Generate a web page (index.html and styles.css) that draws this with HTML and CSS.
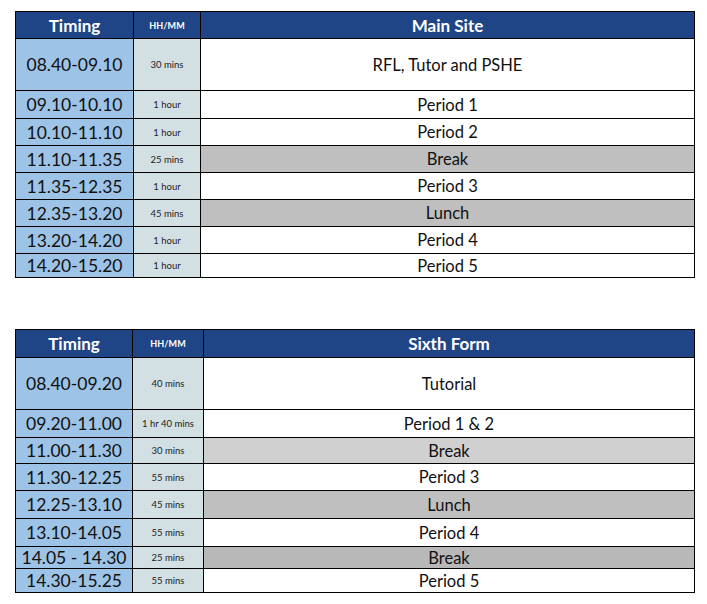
FILE: index.html
```html
<!DOCTYPE html>
<html lang="en">
<head>
<meta charset="utf-8">
<title>Timings</title>
<link rel="stylesheet" href="styles.css">
</head>
<body>
<main class="page">
  <table class="sched sched-main">
    <colgroup><col class="c-time"><col class="c-dur"><col class="c-act"></colgroup>
    <thead>
      <tr class="r-head"><th class="h-time">Timing</th><th class="h-dur">HH/MM</th><th class="h-act">Main Site</th></tr>
    </thead>
    <tbody>
      <tr class="r-52"><td class="time">08.40-09.10</td><td class="dur">30 mins</td><td class="act">RFL, Tutor and PSHE</td></tr>
      <tr class="r-28"><td class="time">09.10-10.10</td><td class="dur">1 hour</td><td class="act">Period 1</td></tr>
      <tr class="r-27"><td class="time">10.10-11.10</td><td class="dur">1 hour</td><td class="act">Period 2</td></tr>
      <tr class="r-27"><td class="time">11.10-11.35</td><td class="dur">25 mins</td><td class="act grey">Break</td></tr>
      <tr class="r-27"><td class="time">11.35-12.35</td><td class="dur">1 hour</td><td class="act">Period 3</td></tr>
      <tr class="r-27"><td class="time">12.35-13.20</td><td class="dur">45 mins</td><td class="act grey">Lunch</td></tr>
      <tr class="r-27"><td class="time">13.20-14.20</td><td class="dur">1 hour</td><td class="act">Period 4</td></tr>
      <tr class="r-24"><td class="time">14.20-15.20</td><td class="dur">1 hour</td><td class="act">Period 5</td></tr>
    </tbody>
  </table>

  <table class="sched sched-sixth">
    <colgroup><col class="c-time"><col class="c-dur"><col class="c-act"></colgroup>
    <thead>
      <tr class="r-head2"><th class="h-time">Timing</th><th class="h-dur">HH/MM</th><th class="h-act">Sixth Form</th></tr>
    </thead>
    <tbody>
      <tr class="r-52"><td class="time">08.40-09.20</td><td class="dur">40 mins</td><td class="act">Tutorial</td></tr>
      <tr class="r-28"><td class="time">09.20-11.00</td><td class="dur">1 hr 40 mins</td><td class="act">Period 1 &amp; 2</td></tr>
      <tr class="r-26"><td class="time">11.00-11.30</td><td class="dur">30 mins</td><td class="act grey-light">Break</td></tr>
      <tr class="r-27"><td class="time">11.30-12.25</td><td class="dur">55 mins</td><td class="act">Period 3</td></tr>
      <tr class="r-28"><td class="time">12.25-13.10</td><td class="dur">45 mins</td><td class="act grey">Lunch</td></tr>
      <tr class="r-28"><td class="time">13.10-14.05</td><td class="dur">55 mins</td><td class="act">Period 4</td></tr>
      <tr class="r-22"><td class="time">14.05 - 14.30</td><td class="dur">25 mins</td><td class="act grey-dark">Break</td></tr>
      <tr class="r-24"><td class="time">14.30-15.25</td><td class="dur">55 mins</td><td class="act">Period 5</td></tr>
    </tbody>
  </table>
</main>
</body>
</html>
```

FILE: styles.css
```css
html, body {
  margin: 0;
  padding: 0;
  background: #ffffff;
}

body {
  font-family: Lato, "Open Sans", "Liberation Sans", sans-serif;
  color: #111111;
}

.page {
  padding: 11px 0 0 15px;
  display: flex;
  flex-direction: column;
  gap: 51px;
  align-items: flex-start;
}

.sched {
  border-collapse: collapse;
  table-layout: fixed;
  width: 680px;
  border: 1.5px solid #000;
}

.sched td,
.sched th {
  border: 1px solid #000;
  padding: 0;
  text-align: center;
  vertical-align: middle;
  white-space: nowrap;
  overflow: hidden;
}

.sched-main .c-time { width: 118px; }
.sched-main .c-dur { width: 67px; }
.sched-sixth .c-time { width: 117px; }
.sched-sixth .c-dur { width: 71px; }

.sched th {
  background: #1f4587;
  color: #ffffff;
  font-weight: 700;
}

.h-time { font-size: 17px; }
.h-dur { font-size: 9px; letter-spacing: 0.1px; }
.h-act { font-size: 17px; }

.time {
  background: #9dc3e6;
  font-size: 17.5px;
  color: #111;
}

.dur {
  background: #d2e0e4;
  font-size: 9.5px;
  color: #222;
}

.act {
  background: #ffffff;
  font-size: 16.5px;
  color: #111;
}

.act.grey { background: #bfbfbf; }
.act.grey-light { background: #d0d0d0; }
.act.grey-dark { background: #b8b8b8; }

.r-head { height: 27px; }
.r-head2 { height: 28px; }
.r-52 { height: 52px; }
.r-28 { height: 28px; }
.r-27 { height: 27px; }
.r-26 { height: 26px; }
.r-24 { height: 24px; }
.r-22 { height: 22px; }
```
